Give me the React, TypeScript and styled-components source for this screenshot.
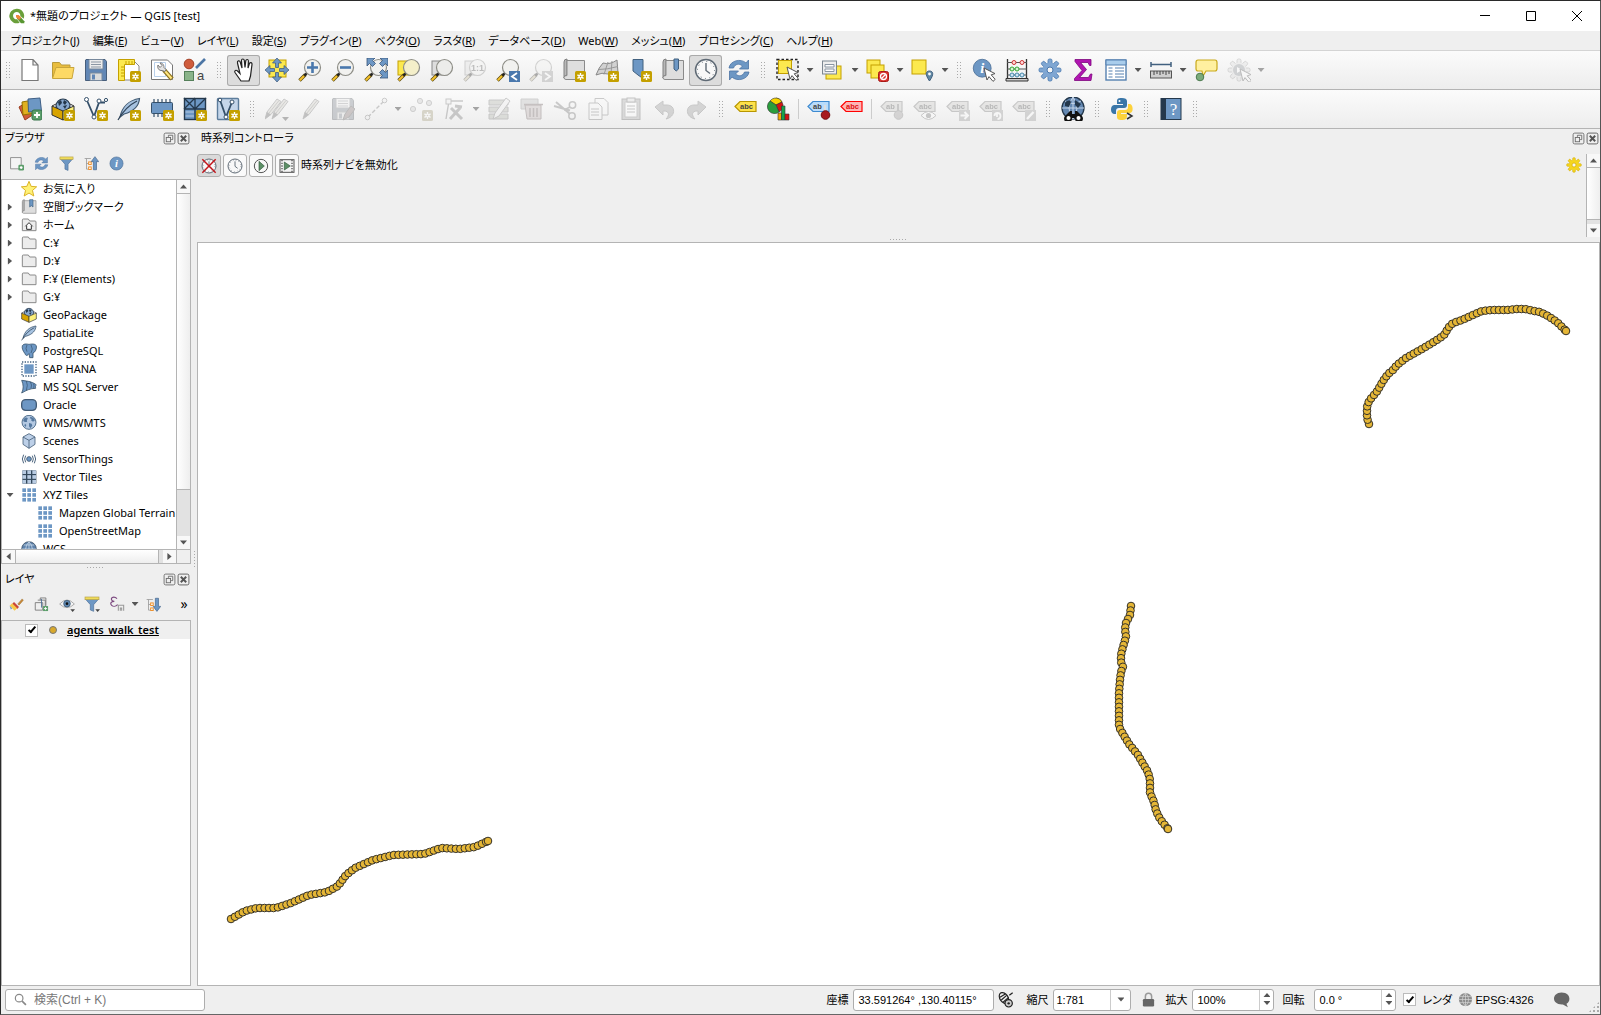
import React from "react";
import styled, { createGlobalStyle, css } from "styled-components";

const line = "#b4b4b4";
const face = "#efefef";
const uiFont = `"Noto Sans", "Noto Sans CJK JP", sans-serif`;
const plainFont = `"Liberation Sans", "Noto Sans CJK JP", sans-serif`;

const GlobalStyle = createGlobalStyle`
  *, *::before, *::after { box-sizing: border-box; }
  html, body { margin: 0; height: 100%; overflow: hidden; }
  body { font: 11px/18px ${uiFont}; font-feature-settings: "palt"; color: #000; background: #222; }
  button, input, select { font: inherit; font-feature-settings: inherit; color: inherit; margin: 0; }
  button { border: 0; padding: 0; background: none; }
  ul { list-style: none; margin: 0; padding: 0; }
  svg { display: block; flex: none; }
`;

/* ---------- icons ---------- */

const Y = "#fce94f";
const YB = "#c4a000";
const B = "#6d97c4";
const BD = "#415a75";

const Star = ({ x = 13, y = 13 }: { x?: number; y?: number }) => (
  <g transform={`translate(${x} ${y})`}>
    <rect width="11" height="11" rx="1.5" fill={YB} />
    <path d="M5.5 2v7M2.4 3.8l6.2 3.5M2.4 7.3l6.2-3.5" stroke="#fff" strokeWidth="1.4" />
    <circle cx="5.5" cy="5.5" r="1.9" fill="#fff" />
    <circle cx="5.5" cy="5.5" r=".8" fill={YB} />
  </g>
);
const Lens = ({ fill = "#f1f1ef" }: { fill?: string }) => (
  <g>
    <path d="M1.5 22.5L7.5 16.5" stroke="#5a4a10" strokeWidth="3.4" />
    <path d="M1.8 22.2L6 18" stroke="#f5c22b" strokeWidth="2" />
    <path d="M6.5 17.5l3-3" stroke="#222" strokeWidth="2.4" />
    <circle cx="14.5" cy="9.5" r="8" fill={fill} stroke="#8d8d86" strokeWidth="1.2" />
  </g>
);
const Cursor = ({ x = 12, y = 10 }: { x?: number; y?: number }) => (
  <path transform={`translate(${x} ${y})`} d="M0 0l11 5.6-3.8 1.2 4 4.6-2.2 2-4-4.8L3 12z" fill="#fff" stroke="#555" strokeWidth="1" />
);
const Pencil = ({ x = 0 }: { x?: number }) => (
  <g transform={`translate(${x} 0)`}>
    <path d="M2 22l2-7L14 2l4 2.5-10 13z" fill="#d9cfa8" stroke="#777" />
    <path d="M2 22l2-7 4 2.5z" fill="#666" />
    <path d="M6 16L16 3.5" stroke="#8c8c70" />
  </g>
);
const MenuMark = () => <path d="M17 20h7l-3.500 4z" fill="#444" />;
const Tag = ({ fill, edge, text }: { fill: string; edge: string; text: string }) => (
  <g>
    <path d="M1 9.500L6 4.500h16v10H6z" fill={fill} stroke={edge} strokeWidth="1.200" />
    <text x="6" y="12.400" fontSize="7.500" fontWeight="700" fontFamily="Liberation Sans, sans-serif" fill={edge === "#f00" ? "#e01010" : "#444"}>{text}</text>
  </g>
);
const Globe = () => (
  <g>
    <circle cx="12" cy="11" r="10.500" fill="#b4c9e2" stroke="#41607f" strokeWidth="1.300" />
    <path d="M4 6c2-3 5-3 6-1s-2 2-1 4-2 2-4 1-2-2-1-4zM14 3c4 0 6 2 7 5l-3 2-3-2 1-2-3-1zM12 12l4 1 1 3-3 4-2-3zM6 13l2 2-1 3-2-2z" fill="#54789f" />
  </g>
);
const Package = () => (
  <g>
    <path d="M5 9a7 7 0 0 1 14 0l-3 6H8z" fill="#88a9cf" stroke="#24384c" strokeWidth="1.200" />
    <path d="M7 5l3-2 1 3-3 3zM13 3l3 2-2 3-2-2zM12 9l4-1-2 4z" fill="#24384c" />
    <path d="M1 9l11 5v9L1 18z" fill="#d8a400" stroke="#333" />
    <path d="M23 9l-11 5v9l11-5z" fill="#fcf07a" stroke="#333" />
    <path d="M1 9l4-2M23 9l-4-2" stroke="#333" />
  </g>
);
const Feather = () => (
  <g>
    <path d="M3 20C5 10 12 3 22.500 1.500 22 8 18 14 7 17z" fill="#a6c2e0" stroke="#3f5870" strokeWidth="1.200" />
    <path d="M1 23C6 14 12 8 20 4" fill="none" stroke="#2f4358" strokeWidth="1.200" />
  </g>
);
const Sync = () => (
  <g>
    <path d="M2 10C3 2.500 14 0 19 5l2.500-3v9h-9l3-3C12 5 8 6 6.500 10z" fill={B} stroke="#4c74a4" strokeWidth=".8" />
    <path d="M22 14c-1 7.500-12 10-17 5l-2.500 3v-9h9l-3 3c3.500 3 7.500 2 9-2z" fill={B} stroke="#4c74a4" strokeWidth=".8" />
  </g>
);
const Folder = () => <path d="M2 20.500V4.500q0-1.500 1.500-1.500H11l2 3h8q1.500 0 1.500 1.500v13z" fill="#ececec" stroke="#8a8a8a" strokeWidth="1.500" />;
const Book = () => (
  <g>
    <path d="M2 4q0-3 3-3v16q-3 0-3 3z" fill="#b8b8b8" stroke="#808080" />
    <path d="M5 2.500h17.500v19H4q-2 0-2-2t3-2z" fill="#dedede" stroke="#8a8a8a" />
  </g>
);
const Gear = ({ fill, edge }: { fill: string; edge: string }) => (
  <g>
    {[0, 45, 90, 135].map((a) => (
      <rect key={a} x="10" y="1" width="4" height="22" rx="1.500" fill={fill} stroke={edge} strokeWidth=".8" transform={`rotate(${a} 12 12)`} />
    ))}
    <circle cx="12" cy="12" r="7.400" fill={fill} />
    <circle cx="12" cy="12" r="3" fill="#f6f6f6" stroke={edge} />
  </g>
);
const Info = () => (
  <g>
    <circle cx="12" cy="12" r="10.500" fill={B} stroke="#4d7098" />
    <text x="12" y="18" textAnchor="middle" fontSize="17" fontStyle="italic" fontWeight="700" fontFamily="Liberation Serif, serif" fill="#fff">i</text>
  </g>
);
const Clock = () => (
  <g>
    <circle cx="12" cy="12" r="10.500" fill="#f8f8f8" stroke="#5f6a75" strokeWidth="1.500" />
    <path d="M12 5v7.500l4 3" fill="none" stroke="#5f6a75" strokeWidth="1.400" />
    <circle cx="12" cy="12" r="8.500" fill="none" stroke="#5f6a75" strokeDasharray="1 3.450" />
  </g>
);
const Filter = () => (
  <g>
    <path d="M2 4.500L9.500 13v8l5 2V13L22 4.500z" fill={B} stroke="#4d7098" />
    <rect x="1.500" y="1.500" width="21" height="4" fill="#f0dc5a" stroke="#b7a24a" />
  </g>
);
const Tree = ({ up }: { up?: boolean }) => (
  <g>
    <path d="M1 4h10M4 4v17h8M4 12h6" stroke="#999" strokeWidth="1.300" fill="none" />
    <rect x="7.500" y="9.500" width="4" height="4" fill="#fff" stroke="#f08a1c" strokeWidth="1.500" />
    <rect x="7.500" y="17.500" width="4" height="4" fill="#fff" stroke="#f08a1c" strokeWidth="1.500" />
    <path transform={up ? undefined : "matrix(1 0 0 -1 0 24)"} d="M17.500 1l6 8h-3.500v13h-5V9H11.500z" fill={B} stroke="#3f5f85" />
  </g>
);
const Tiles = ({ dark }: { dark?: boolean }) => (
  <g>
    {dark && <rect x="2" y="2" width="21" height="20" rx="1" fill="#33485c" />}
    {[0, 1, 2].map((r) => [0, 1, 2].map((c) => (
      <rect key={`${r}${c}`} x={2 + c * 7.5} y={2 + r * 7.2} width="5.500" height="5.500" fill={dark ? "#b8cbe2" : B} />
    )))}
  </g>
);
const Floppy = () => (
  <g>
    <path d="M2 1.500h19l1.500 2v19H1.500V2z" fill="#6287b5" stroke="#475e7b" />
    <path d="M5 1.500h14v9.500H5z" fill="#ececec" stroke="#77889c" />
    <path d="M7 4h10M7 6.500h10M7 9h10" stroke="#8b96a3" strokeWidth="1" />
    <path d="M6 15h12v7.500H6z" fill="#dcdcdc" stroke="#77889c" />
    <path d="M8 16.500h3v5H8z" fill="#6287b5" />
  </g>
);

const icons: Record<string, React.ReactNode> = {
  newfile: <path d="M4 1.500h11l5 5.500v15.500H4zM15 1.500V7h5" fill="#fff" stroke="#777" strokeWidth="1.200" />,
  open: <g><path d="M1.500 20V4.500h7l2 2.500H19v3" fill="#e9bd3e" stroke="#b99a3a" /><path d="M1.500 20.500L5 9.500h18l-2 11z" fill="#fdd965" stroke="#c9a63c" /></g>,
  save: <Floppy />,
  layout: <g><path d="M3 3h14l5 5v14H3z" fill="#fff" stroke="#888" /><path d="M1.500 1.500h16v5h-10v16h-6z" fill={Y} stroke={YB} /><path d="M4 9h3M4 12h3M4 15h3M4 18h3M9 3v3M12 3v3M15 3v3" stroke={YB} /><Star /></g>,
  wrench: <g><path d="M1.500 2h16l5 5v14.500h-21z" fill="#fff" stroke="#777" /><path d="M4.500 4.500h11v14h-11z" fill="#fff" stroke="#b9d0ea" /><path d="M14 12l8 9" stroke="#8d7320" strokeWidth="4.500" /><path d="M15 13l6.500 7.500" stroke="#ffe680" strokeWidth="2" /><path d="M8 7c-1 3 1 6 4 5.500l3 1 1-2-2-2c0-3-2-5-4-4.500l2 2.500-2 2z" fill="#e4e4e4" stroke="#777" /></g>,
  style: <g><circle cx="6" cy="6" r="4.800" fill="#cf5c3c" stroke="#a33f25" /><path d="M13 10L22 1" stroke="#4d76a5" strokeWidth="2.600" /><rect x="1.500" y="13.500" width="9" height="9" fill="#8ab48a" stroke="#55805a" /><text x="14" y="22" fontSize="13" fontFamily="Liberation Sans, sans-serif" fill="#444">a</text></g>,
  hand: <path d="M9 23l-6-8.500c-1-2 1-3 2.500-1.500L8 15.500 5.500 5c-.5-2.500 2-3 2.700-1L10 10 9.500 2.500c0-2 2.500-2 2.800 0L13 9.500l.8-6.800c.5-1.800 2.700-1.500 2.600.4L16 10l1.500-4.600c.8-1.500 2.800-.8 2.500 1L18.500 18 17 23z" fill="#fff" stroke="#222" strokeWidth="1.200" />,
  pansel: <g><rect x="4" y="2" width="17" height="17" fill={Y} stroke={YB} /><g fill={B} stroke="#3a567a" strokeWidth=".7"><path d="M12 0l4.500 5h-3v4.500h-3V5h-3zM12 24l4.500-5h-3v-4.500h-3V19h-3zM0 12l5-4.500v3h4.500v3H5v3zM24 12l-5-4.500v3h-4.500v3H19v3z" /></g></g>,
  zoomin: <g><Lens /><path d="M14.500 4v11M9 9.500h11" stroke="#4a78ad" strokeWidth="2.600" /></g>,
  zoomout: <g><Lens /><path d="M9 9.500h11" stroke="#4a78ad" strokeWidth="2.600" /></g>,
  zoomfull: <g><Lens /><path fill={B} stroke="#3a567a" strokeWidth=".8" d="M3 0h8L8.500 2.500l3 3-3 3-3-3L3 8zM24 0h-8l2.500 2.500-3 3 3 3 3-3L24 8zM24 20h-8l2.500-2.500-3-3 3-3 3 3L24 12z" /></g>,
  zoomsel: <g><rect x="1" y="3" width="15" height="14" fill={Y} stroke={YB} /><Lens fill="#f4efca" /></g>,
  zoomlayer: <g><rect x="2" y="3" width="15" height="14" fill="#ddd" stroke="#888" /><Lens fill="#ececea" /></g>,
  zoom1: <g><rect x="2" y="3" width="15" height="14" fill="#ddd" stroke="#888" /><Lens /><text x="14.500" y="13" textAnchor="middle" fontSize="9" fontWeight="700" fontFamily="Liberation Sans, sans-serif" fill="#555">1:1</text></g>,
  zoomprev: <g><Lens /><rect x="13" y="13" width="11" height="11" fill="#4a78ad" /><path d="M21 15l-5 3.500 5 3.500" fill="none" stroke="#fff" strokeWidth="1.800" /></g>,
  zoomnext: <g><Lens /><rect x="13" y="13" width="11" height="11" fill="#9a9a9a" /><path d="M16 15l5 3.500-5 3.500" fill="none" stroke="#fff" strokeWidth="1.800" /></g>,
  newmap: <g><Book /><Star /></g>,
  new3d: <g><path d="M1 17q3-8 7-12 7 2 14-3l1 13q-6 4-10 1-6-2-12 1z" fill="#d2d2d2" stroke="#888" /><path d="M4 11.500q8 0 19-3M13 4L9 16.500M17 3l-1 13" stroke="#999" fill="none" /><Star /></g>,
  newmark: <g><path d="M5 1.500h10v19L10 17 5 13z" fill={B} stroke="#41607f" /><Star /></g>,
  marks: <g><Book /><path d="M13 1h4.500v10L15.200 13 13 11z" fill={B} stroke="#41607f" /></g>,
  clock: <Clock />,
  sync: <Sync />,
  select: <g><rect x="1" y="1.500" width="21" height="20" fill="#eee" stroke="#222" strokeWidth="1.400" strokeDasharray="2.500 2" /><rect x="2.500" y="2.500" width="13" height="13" fill={Y} stroke={YB} /><Cursor x={11} y={9} /></g>,
  form: <g><rect x="5" y="8" width="15" height="13" fill={Y} stroke={YB} /><rect x="1.500" y="3" width="14" height="13" fill="#eee" stroke="#7d8791" /><path d="M4 6.500h9v2.500H4zM4 11h9v2.500H4z" fill="#fff" stroke="#8b96a3" /></g>,
  deselect: <g><rect x="1" y="2" width="13" height="13" fill={Y} stroke={YB} /><rect x="5" y="7" width="13" height="13" fill={Y} stroke={YB} /><rect x="12.500" y="13.500" width="10" height="10" rx="2" fill="#d9302c" stroke="#a81916" /><circle cx="17.500" cy="18.500" r="3" fill="none" stroke="#fff" strokeWidth="1.300" /><path d="M15.500 20.500l4-4" stroke="#fff" strokeWidth="1.300" /></g>,
  selloc: <g><rect x="1" y="2" width="14" height="14" fill={Y} stroke={YB} /><path d="M18.500 23c-5-7-3.500-10 0-10s5 3 0 10z" fill="#5f87a3" stroke="#41607f" /><circle cx="18.500" cy="16" r="1.400" fill="#fff" /></g>,
  identify: <g><g transform="scale(.85)"><Info /></g><Cursor /></g>,
  abacus: <g><path d="M2.500 1v20M21.500 1v20" stroke="#333" strokeWidth="1.300" /><path d="M1 20.500h22v2.500H1z" fill="#ccc" stroke="#333" /><path d="M2 4.500h20M2 11h20M2 17h20" stroke="#555" /><g fill="#ffd8d8" stroke="#c33"><circle cx="9" cy="4.500" r="2" /><circle cx="17" cy="4.500" r="2" /></g><g fill="#d6f2d6" stroke="#3a3"><circle cx="7" cy="11" r="2" /><circle cx="12" cy="11" r="2" /></g><g fill="#cfe4f5" stroke="#48a"><circle cx="7" cy="17" r="2" /><circle cx="12" cy="17" r="2" /><circle cx="17" cy="17" r="2" /></g></g>,
  gear: <Gear fill="#7fa6d2" edge="#4a78ad" />,
  sigma: <path d="M4 1.500h16v6h-1.500L17 4.500H9.500l6 7-7 8h9l2-3.500H21l-1 6.500H3.500v-2l7.500-8-7-9z" fill="#b015b0" stroke="#7e067e" strokeWidth=".8" />,
  table: <g><rect x="2" y="2" width="20" height="20" fill="#fff" stroke="#5580b0" strokeWidth="1.400" /><path d="M2 2h20v5H2z" fill="#a9cdec" stroke="#5580b0" /><path d="M4.500 10h4M4.500 13h4M4.500 16h4M4.500 19h4M11 10h9M11 13h9M11 16h9M11 19h9" stroke="#5580b0" strokeWidth="1.200" /></g>,
  ruler: <g><path d="M2 6.500h20M2 4v5M22 4v5" stroke="#41607f" strokeWidth="1.500" /><rect x="1.500" y="13" width="21" height="7" fill="#cfcfcf" stroke="#555" /><path d="M5 13v4M8 13v3M11 13v4M14 13v3M17 13v4M20 13v3" stroke="#444" /></g>,
  maptip: <g><path d="M4 2h17q2 0 2 2.500v6q0 2.500-2 2.500h-9l-3 5-1-5H4q-2 0-2-2.500v-6Q2 2 4 2z" fill="#fff0a0" stroke="#c9a91b" strokeWidth="1.200" /><circle cx="6" cy="19" r="3.800" fill="#7bab7b" stroke="#4c7a4f" /></g>,
  action: <g><Gear fill="#ddd" edge="#888" /><circle cx="12" cy="12" r="6" fill="#7f95b0" /><path d="M10 9l5 3-5 3z" fill="#fff" /><Cursor x={13} y={11} /></g>,
  addlayer: <g><path d="M1 10l8-5 7 12-9 6z" fill="#cf5c3c" stroke="#9a3b1c" /><path d="M4 5l11-2 2 13-12 2z" fill="#e0b020" stroke="#967200" /><path d="M10 2l12-1 1.500 13-13 1z" fill={B} stroke="#3f5f85" /><rect x="14" y="13" width="10" height="10" rx="2" fill="#5b9e6a" stroke="#37754a" /><path d="M19 15v6M16 18h6" stroke="#fff" strokeWidth="1.800" /></g>,
  geopackage: <Package />,
  newgpkg: <g><Package /><Star /></g>,
  newshape: <g><path d="M3 3.500l7 16 5-14h6" fill="none" stroke="#35506a" strokeWidth="1.800" /><g fill="#fff" stroke="#35506a"><circle cx="2.500" cy="2.500" r="2" /><circle cx="10" cy="20" r="2" /><circle cx="15" cy="4" r="2" /><circle cx="22" cy="3" r="1.600" /></g><Star /></g>,
  feather: <Feather />,
  newfeather: <g><Feather /><Star /></g>,
  newmem: <g><path d="M4 2v18M8 2v18M12 2v18M16 2v18M20 2v18" stroke="#35506a" strokeWidth="1.200" /><rect x="1.500" y="5.500" width="21" height="11" rx="1" fill={B} stroke="#35506a" /><Star /></g>,
  newmesh: <g><rect x="1.500" y="1.500" width="21" height="21" fill={B} stroke="#24384c" strokeWidth="1.400" /><path d="M12 1v22M1 12h22M1 1l11 11L23 1M1 12L12 1" stroke="#24384c" strokeWidth="1.300" fill="none" /><path d="M2.500 15h8.500M2.500 19h8.500" stroke="#b8cbe2" /><Star /></g>,
  newgps: <g><rect x="1.500" y="1.500" width="21" height="21" rx="1" fill="#c5d6ea" stroke="#5d7d9c" strokeWidth="1.400" /><path d="M4 3l6 17 6-15" fill="none" stroke="#35506a" strokeWidth="1.800" /><g fill="#fff" stroke="#35506a"><circle cx="4" cy="3" r="1.800" /><circle cx="10" cy="20" r="2" /><circle cx="16" cy="5" r="2" /></g><Star /></g>,
  pencils: <g><Pencil x={-2} /><Pencil x={5} /><MenuMark /></g>,
  pencil: <Pencil x={3} />,
  saveedit: <g><Floppy /><path d="M12 23l2-6 6-8 4 3-6 8z" fill="#b66" stroke="#555" /></g>,
  addline: <g><path d="M4 20L20 4" stroke="#777" strokeWidth="1.400" strokeDasharray="4 2" /><g fill="#eee" stroke="#777"><circle cx="3.500" cy="20.500" r="2.300" /><circle cx="20.500" cy="3.500" r="2.300" /></g></g>,
  points: <g><g fill="#ccc" stroke="#888"><circle cx="4" cy="12" r="2.600" /><circle cx="11" cy="4" r="2.600" /><circle cx="20" cy="6" r="2.600" /></g><Star /></g>,
  vertex: <g><path d="M4 22L7 4h14" fill="none" stroke="#777" strokeWidth="1.400" /><rect x="4" y="2" width="5" height="5" fill="#eee" stroke="#777" /><path d="M8 22l10-11M9 11l11 11M13 9l7 1" stroke="#777" strokeWidth="3" /></g>,
  modify: <g><path d="M2 3h19v5H2zM2 10h19v5H2zM2 17h19v5H2z" fill="#a9b98a" stroke="#777" /><path d="M6 22l2-6L19 1l4 3-11 15z" fill="#eee" stroke="#777" /></g>,
  del: <g><path d="M1 2h17v10H1z" fill="#bbb" stroke="#888" /><path d="M5 8h16v14H7z" fill="#e3a5a5" stroke="#955" /><path d="M4 7.500h19M10 11v9M13.500 11v9M17 11v9" stroke="#955" strokeWidth="1.500" /></g>,
  cut: <g fill="none" stroke="#777" strokeWidth="1.500"><path d="M1 9l16 4.500M3 5l14 12" strokeWidth="2" /><circle cx="19.500" cy="8" r="3.200" /><circle cx="19" cy="19" r="3.200" /><path d="M11 13l6-3" /></g>,
  copy: <g fill="#f8f8f8" stroke="#777"><path d="M9 1.500h9l4 4V18H9z" /><path d="M3 6h9l4 4v12.500H3z" /><path d="M5 12h8M5 15h8M5 18h8" /></g>,
  paste: <g><rect x="3" y="2" width="18" height="20.500" fill="#aaa" stroke="#666" /><path d="M6 5h12v15H6z" fill="#fff" stroke="#888" /><rect x="8" y="1" width="8" height="4" fill="#ddd" stroke="#666" /><path d="M8 9h8M8 12h8M8 15h8" stroke="#777" /></g>,
  undo: <path d="M3 10l8-6v4h4c9 0 9 12-1 14 4-4 3-8-2-8h-1v4z" fill="#999" stroke="#777" />,
  redo: <path d="M21 10l-8-6v4H9c-9 0-9 12 1 14-4-4-3-8 2-8h1v4z" fill="#999" stroke="#777" />,
  label: <Tag fill="#fde14a" edge="#b89600" text="abc" />,
  diagram: <g><path d="M9 8V1a7 7 0 0 1 6 4z" fill="#f7d400" stroke="#333" strokeWidth=".6" /><path d="M9 8L3 4a7 7 0 0 1 12 1z" fill="#f7d400" stroke="#333" strokeWidth=".6" /><path d="M9 8l6-3a7 7 0 0 1-3 10z" fill="#d41414" stroke="#333" strokeWidth=".6" /><path d="M9 8l3 7A7 7 0 0 1 3 4z" fill="#2a9e3c" stroke="#333" strokeWidth=".6" /><path d="M11 16h3.500v7H11z" fill="#f7a800" stroke="#333" strokeWidth=".6" /><path d="M14.500 9H18v14h-3.500z" fill="#16a34a" stroke="#333" strokeWidth=".6" /><path d="M18 17h4v6h-4z" fill="#d41414" stroke="#333" strokeWidth=".6" /></g>,
  tagpin: <g><Tag fill="#b9dcfb" edge="#3d8ad0" text="ab" /><path d="M18 8v9" stroke="#ddd" strokeWidth="2" /><circle cx="18.500" cy="18" r="4.300" fill="#a8191e" stroke="#6e0d10" /></g>,
  tagred: <Tag fill="#fdb5b5" edge="#f00" text="abc" />,
  tagpin2: <g><Tag fill="#ccc8b8" edge="#777" text="ab" /><path d="M18 7v9" stroke="#777" strokeWidth="2" /><circle cx="18.500" cy="18" r="4.300" fill="#a89898" stroke="#777" /></g>,
  tageye: <g><Tag fill="#ccc8b8" edge="#777" text="abc" /><path d="M8 18.500q7.500-8 15 0-7.500 8-15 0z" fill="#fff" stroke="#777" /><circle cx="15.500" cy="18.500" r="2.600" fill="#777" /></g>,
  tagmove: <g><Tag fill="#ccc8b8" edge="#777" text="abc" /><rect x="13" y="13" width="11" height="11" fill="#999" /><path d="M14.500 18.500h7M18.500 15l3.500 3.500-3.500 3.500" stroke="#fff" strokeWidth="2" fill="none" /></g>,
  tagrot: <g><Tag fill="#ccc8b8" edge="#777" text="abc" /><rect x="13" y="13" width="11" height="11" fill="#999" /><path d="M15.500 19a3 3 0 1 1 3 3M18 17v3" stroke="#fff" strokeWidth="1.800" fill="none" /></g>,
  tagedit: <g><Tag fill="#ccc8b8" edge="#777" text="abc" /><rect x="13" y="13" width="11" height="11" fill="#999" /><path d="M15 22l6.500-7" stroke="#fff" strokeWidth="2.400" fill="none" /></g>,
  search: <g><circle cx="12" cy="11" r="11" fill="#6488b2" stroke="#24384c" strokeWidth="1.300" /><path d="M1 11h22M12 0v22M4 4q8 5 16 0M12 0Q4 11 12 22M12 0q8 11 0 22" fill="none" stroke="#c3d4e8" /><path d="M4 6c2-3 5-3 6-1l-2 5-4-1zM14 3l6 4-3 4-3-3z" fill="#24384c" /><path d="M9 14h2v3h3v-3h2l5 5a4 4 0 1 1-7 2h-3a4 4 0 1 1-7-2z" fill="#111" /><circle cx="7.500" cy="21" r="2" fill="#fff" /><circle cx="17.500" cy="21" r="2" fill="#fff" /></g>,
  python: <g><path d="M12 1c-5 0-5 1.500-5 4v2h6v1H4c-4 0-4 9 0 9h2v-3c0-2 1-3 3-3h5c2 0 3-1 3-3V4c0-2-2-3-5-3z" fill="#3a76a8" /><path d="M11 23c5 0 6-1.500 6-4v-2h-6v-1h9c4 0 3-9 0-9h-2v3c0 2-1 3-3 3h-5c-2 0-3 1-3 3v4c0 2 1 3 4 3z" fill="#fdd23b" /><circle cx="9.500" cy="4" r="1" fill="#fff" /><path d="M17 16l5 3-5 3" fill="none" stroke="#333" strokeWidth="1.500" /></g>,
  help: <g><rect x="2" y="1.500" width="20" height="21" fill={B} stroke="#24384c" /><path d="M2 1.500h5v21H2z" fill="#24384c" /><text x="14.500" y="18" textAnchor="middle" fontSize="17" fontFamily="Liberation Serif, serif" fill="#fff">?</text></g>,
  addsel: <g><path d="M2.500 2.500h17v18h-17z" fill="#f4f4f4" stroke="#888" strokeWidth="1.400" /><rect x="15" y="14" width="9" height="9" rx="2" fill="#5b9e6a" /><circle cx="19.500" cy="18.500" r="2.200" fill="#fff" /></g>,
  filter: <Filter />,
  filtermenu: <g><Filter /><MenuMark /></g>,
  collapse: <Tree up />,
  expand: <Tree />,
  info: <Info />,
  fav: <path d="M12 .5l3.200 7.500 8.300.7-6.300 5.500 2 8.300-7.200-4.400-7.200 4.400 2-8.300L.5 8.700 8.800 8z" fill="#fff176" stroke="#d8ae1c" strokeWidth="1.400" />,
  bookmark: <g><Book /><path d="M13 1h5v11l-2.500-2L13 12z" fill={B} stroke="#41607f" /></g>,
  home: <g><Folder /><path d="M6.500 14L12 8.500l5.500 5.500M8.500 13v5.500h7V13" fill="#fff" stroke="#222" strokeWidth="1.400" /></g>,
  folder: <Folder />,
  elephant: <g><path d="M2 4c3-4 8-2 10-2s8-2 11 2c1 5-2 10-5 11v7h-5l-1-6c-3 4-5 3-6 0C3 12 1 8 2 4z" fill={B} stroke="#35506a" strokeWidth="1.200" /><path d="M9 3q-3 5 0 10M15 3q4 6 0 12" fill="none" stroke="#35506a" /></g>,
  hana: <g><rect x="5" y="5" width="14" height="14" fill={B} /><rect x="1.500" y="1.500" width="21" height="21" fill="none" stroke="#41607f" strokeWidth="2" strokeDasharray="2 2" /></g>,
  mssql: <g><path d="M1 2c10 1 18 3 22 7-2 1-1 3-1 5-8 0-14 3-21 7 3-6 3-12 0-19z" fill={B} stroke="#35506a" strokeWidth="1.200" /><path d="M8 3q3 6 0 14M14 4q3 5 1 10M19 7q1 3 0 7" fill="none" stroke="#35506a" /></g>,
  oracle: <rect x="1" y="4" width="22" height="16" rx="6" fill={B} stroke={BD} strokeWidth="2" />,
  globe: <Globe />,
  scenes: <g fill="#bdd0e8" stroke={BD} strokeWidth="1.200"><path d="M12 1l9 5v11l-9 6-9-6V6z" /><path d="M3 6l9 5 9-5M12 11v12" fill="none" /></g>,
  sensor: <g fill="none" stroke={BD} strokeWidth="1.400"><circle cx="12" cy="12" r="3.500" fill={B} /><path d="M7 7q-3 5 0 10M4 5.500q-4 6.500 0 13M17 7q3 5 0 10M20 5.500q4 6.500 0 13" /></g>,
  vtiles: <Tiles dark />,
  tiles: <Tiles />,
  wcs: <g><circle cx="12" cy="12" r="11" fill="#5f83ac" stroke="#24384c" /><path d="M1 12h22M12 1v22M4 6h16M12 1Q2 12 12 23M12 1q10 11 0 22" fill="none" stroke="#dce8f4" /></g>,
  brush: <g><path d="M14 11l7-8 2 2-7 8z" fill="#c98a3a" stroke="#8a5a1c" strokeWidth=".6" /><path d="M8 8l8 8-3 3-8-8z" fill="#c8453b" /><path d="M5 10l8 8-4 4-8-8z" fill="#f7c94b" /><path d="M1 14l4 4-2 2z" fill="#5b8fd0" /></g>,
  addgroup: <g fill="none" stroke="#777" strokeWidth="1.400"><path d="M2 9h12v12H2zM6 5h12v12M10 5V1.500h9V14" /><path d="M12 3v14" stroke="#4d7098" /><rect x="14.500" y="14.500" width="8" height="8" fill="#5b9e6a" stroke="none" /><path d="M18.500 16v5M16 18.500h5" stroke="#fff" /></g>,
  eye: <g><path d="M1 12Q12 0 23 12 12 23 1 12z" fill="#f6f6f6" stroke="#888" /><circle cx="12" cy="11.500" r="5" fill="#5f87b0" stroke="#35506a" /><circle cx="12" cy="11.500" r="2" fill="#111" /><MenuMark /></g>,
  epsilon: <g><path d="M12 4C8 0 2 2 4 6c1 2 4 2 4 2-5 0-7 3-4 6 2 2 6 2 9-1" fill="none" stroke="#7d4a80" strokeWidth="1.800" /><path d="M14 22v-8h8v8M17 22v-4h2v4" fill="none" stroke="#999" strokeWidth="1.600" /></g>,
  toff: <g><Clock /><path d="M2 2l20 20M22 2L2 22" stroke="#c4161c" strokeWidth="2.200" /></g>,
  tplay: <g><circle cx="12" cy="12" r="10" fill="#f8f8f8" stroke="#555" strokeWidth="1.500" /><path d="M9 5l8 7-8 7z" fill="#5b8f65" stroke="#335a3c" /></g>,
  tfilm: <g><rect x="1.500" y="2.500" width="21" height="19" fill="#f4f4f4" stroke="#555" strokeWidth="1.500" /><path d="M4.500 3v18M19.500 3v18" stroke="#555" strokeWidth="2" strokeDasharray="2 2" /><path d="M8 6l9 6-9 6z" fill="#5b8f65" stroke="#335a3c" /></g>,
  goldgear: <Gear fill="#f5d51c" edge="#d0a800" />,
  dock: <g fill="none" stroke="#666" strokeWidth="1.600"><rect x="2" y="2" width="20" height="20" rx="3" /><rect x="6" y="10" width="8" height="8" /><path d="M10 9V6h8v8h-3" /></g>,
  shut: <g fill="none" stroke="#555" strokeWidth="1.600"><rect x="2" y="2" width="20" height="20" rx="3" /><path d="M7 7l10 10M17 7L7 17" strokeWidth="3.600" /></g>,
  qgis: <g><path d="M12 1a11 11 0 1 0 4 21l-4-5a5.500 5.500 0 1 1 5-5l5 4A11 11 0 0 0 12 1z" fill="#6a9f3a" /><path d="M12 12h4l7 8v3h-5l-6-7z" fill="#589632" /><path d="M10.500 10.500h4l4 4-3.500 3.500-4.500-4z" fill="#f0883a" /></g>,
  mag: <g fill="none" stroke="#888" strokeWidth="2.200"><circle cx="9.500" cy="9.500" r="7" /><path d="M15 15l7 7" strokeWidth="3" /></g>,
  mouse: <g><ellipse cx="9" cy="9" rx="6" ry="9" transform="rotate(-35 9 9)" fill="#eee" stroke="#222" strokeWidth="1.800" /><path d="M3 8l8-5M5 12l8-7M8 15l8-7M17 5l5-4" stroke="#222" strokeWidth="1.800" /><circle cx="16" cy="17" r="5.500" fill="#ccc" stroke="#222" strokeWidth="1.800" /><circle cx="16" cy="17" r="1.800" fill="#222" /></g>,
  lock: <g><path d="M7 12V7q0-5 5-5t5 5v5" fill="none" stroke="#999" strokeWidth="2.400" /><rect x="3" y="11" width="18" height="12" rx="2" fill="#666" /></g>,
  crs: <g><circle cx="12" cy="12" r="10.500" fill="#8b8b8b" /><path d="M1 12h22M12 1v22M3 7h18M3 17h18M12 1Q2 12 12 23M12 1q10 11 0 22" fill="none" stroke="#ddd" /></g>,
  bubble: <path d="M12 2c14 0 13 14 7 16l2 5-7-4C-3 20-2 2 12 2z" fill="#666" />,
};

const Svg = ({ name, size = 24 }: { name: string; size?: number }) => (
  <svg width={size} height={size} viewBox="0 0 24 24" aria-hidden="true">{icons[name]}</svg>
);

/* ---------- frame ---------- */

const Window = styled.div`
  height: 100vh;
  display: flex;
  flex-direction: column;
  background: ${face};
  border: 1px solid #2a2a2a;
  border-right-color: #555;
  border-bottom-color: #666;
`;
const TitleBar = styled.header`
  display: flex;
  align-items: center;
  height: 30px;
  padding-left: 8px;
  background: #fff;
`;
const Title = styled.h1`
  flex: 1;
  margin: 0 0 0 5px;
  padding-bottom: 1px;
  font-size: 11px;
  font-weight: 400;
`;
const WindowButton = styled.button`
  width: 46px;
  height: 30px;
  display: grid;
  place-items: center;
`;
const MenuBar = styled.nav`
  display: flex;
  height: 20px;
  padding-left: 10px;
  gap: 13px;
  border-bottom: 1px solid #d4d4d4;
`;
const MenuButton = styled.button`
  white-space: nowrap;
  line-height: 18px;
`;
const Toolbar = styled.div`
  display: flex;
  align-items: center;
  height: 39px;
  background: linear-gradient(#fbfbfb, #ededed);
  border-bottom: 1px solid ${line};
`;
const Grip = styled.span<{ $first?: boolean }>`
  width: ${(p) => (p.$first ? 12 : 16)}px;
  height: 18px;
  flex: none;
  background: radial-gradient(circle, #aaa 1px, transparent 1px) 0 0 / 3px 3px content-box;
  padding: 0 ${(p) => (p.$first ? 3 : 6)}px 0 ${(p) => (p.$first ? 4 : 5)}px;
`;
const Divider = styled.span`
  width: 1px;
  height: 20px;
  margin: 0 3px;
  background: #ccc;
`;
const ToolButton = styled.button<{ $on?: boolean }>`
  flex: none;
  width: 33px;
  height: 31px;
  display: grid;
  place-items: center;
  border-radius: 3px;
  ${(p) => p.$on && css`background: #dcdcdc; box-shadow: inset 0 0 0 1px #aaa;`}
  &:disabled { filter: grayscale(0.8); opacity: 0.35; }
`;
const Arrow = styled.span<{ $dir?: "up" | "down" | "left" | "right" }>`
  width: 7px;
  height: 7px;
  flex: none;
  background: #555;
  clip-path: ${(p) =>
    ({
      up: "polygon(50% 20%, 100% 80%, 0 80%)",
      down: "polygon(0 20%, 100% 20%, 50% 80%)",
      left: "polygon(80% 0, 80% 100%, 20% 50%)",
      right: "polygon(20% 0, 80% 50%, 20% 100%)",
    })[p.$dir ?? "down"]};
`;
const DropButton = styled.button`
  width: 12px;
  height: 31px;
  display: grid;
  place-items: center;
  &:disabled { opacity: 0.5; }
`;

type Item = string | [string, string, string?];
/* flags: d = disabled, m = has a menu, o = switched on */
const mapTools: Item[] = [
  "|", ["newfile", "New Project"], ["open", "Open Project"], ["save", "Save Project"], ["layout", "New Print Layout"], ["wrench", "Layout Manager"], ["style", "Style Manager"],
  "|", ["hand", "Pan Map", "o"], ["pansel", "Pan to Selection"], ["zoomin", "Zoom In"], ["zoomout", "Zoom Out"], ["zoomfull", "Zoom Full"], ["zoomsel", "Zoom to Selection"], ["zoomlayer", "Zoom to Layer"], ["zoom1", "Native Resolution", "d"], ["zoomprev", "Zoom Last"], ["zoomnext", "Zoom Next", "d"], ["newmap", "New Map View"], ["new3d", "New 3D Map View"], ["newmark", "New Bookmark"], ["marks", "Show Bookmarks"], ["clock", "Temporal Controller", "o"], ["sync", "Refresh"],
  "|", ["select", "Select Features", "m"], ["form", "Select by Value", "m"], ["deselect", "Deselect", "m"], ["selloc", "Select by Location", "m"],
  "|", ["identify", "Identify"], ["abacus", "Field Calculator"], ["gear", "Toolbox"], ["sigma", "Statistics"], ["table", "Attribute Table", "m"], ["ruler", "Measure", "m"], ["maptip", "Map Tips"], ["action", "Run Action", "dm"],
];
const editTools: Item[] = [
  "|", ["addlayer", "Data Source Manager"], ["newgpkg", "New GeoPackage"], ["newshape", "New Shapefile"], ["newfeather", "New SpatiaLite"], ["newmem", "New Scratch Layer"], ["newmesh", "New Mesh"], ["newgps", "New GPX"],
  "|", ["pencils", "Current Edits", "d"], ["pencil", "Toggle Editing", "d"], ["saveedit", "Save Edits", "d"], ["addline", "Digitize", "dm"], ["points", "Add Point", "d"], ["vertex", "Vertex Tool", "dm"], ["modify", "Modify Attributes", "d"], ["del", "Delete Selected", "d"], ["cut", "Cut", "d"], ["copy", "Copy", "d"], ["paste", "Paste", "d"], ["undo", "Undo", "d"], ["redo", "Redo", "d"],
  "|", ["label", "Labeling"], ["diagram", "Diagrams"], "-", ["tagpin", "Highlight Pinned"], ["tagred", "Unplaced Labels"], "-", ["tagpin2", "Pin Labels", "d"], ["tageye", "Show Labels", "d"], ["tagmove", "Move Label", "d"], ["tagrot", "Rotate Label", "d"], ["tagedit", "Change Label", "d"],
  "|", ["search", "MetaSearch"], "|", ["python", "Python Console"], "|", ["help", "Help"], "|",
];

const Tools = ({ items, name }: { items: Item[]; name: string }) => (
  <Toolbar role="toolbar" aria-label={name}>
    {items.map((it, i) => {
      if (it === "|") return <Grip key={i} $first={i === 0} />;
      if (typeof it === "string") return <Divider key={i} />;
      const [icon, label, flags = ""] = it;
      return (
        <React.Fragment key={i}>
          <ToolButton aria-label={label} $on={flags.includes("o")} disabled={flags.includes("d")}>
            <Svg name={icon} />
          </ToolButton>
          {flags.includes("m") && (
            <DropButton aria-label={`${label} menu`} disabled={flags.includes("d")}><Arrow /></DropButton>
          )}
        </React.Fragment>
      );
    })}
  </Toolbar>
);

/* ---------- docks ---------- */

const Body = styled.main`
  flex: 1;
  min-height: 0;
  display: flex;
`;
const Side = styled.aside`
  width: 190px;
  display: flex;
  flex-direction: column;
  min-height: 0;
`;
const Center = styled.section`
  flex: 1;
  min-width: 0;
  display: flex;
  flex-direction: column;
`;
const DockTitle = styled.div`
  display: flex;
  align-items: center;
  height: 20px;
  padding: 0 1px 2px 4px;
`;
const DockName = styled.h2`
  flex: 1;
  margin: 0;
  font-size: 11px;
  font-weight: 400;
`;
const DockButton = styled.button`
  width: 14px;
  height: 14px;
  display: grid;
  place-items: center;
`;
const DockTools = styled.div`
  display: flex;
  align-items: center;
  height: 30px;
  padding: 0 0 2px 3px;
`;
const SmallButton = styled.button`
  width: 25px;
  height: 24px;
  display: flex;
  align-items: center;
  justify-content: center;
`;
const MoreButton = styled(SmallButton)`
  width: 14px;
  margin-left: auto;
  font-size: 14px;
`;
const Splitter = styled.div<{ $vertical?: boolean; $size: number }>`
  flex: none;
  display: grid;
  place-items: center;
  ${(p) => (p.$vertical ? "width" : "height")}: ${(p) => p.$size}px;
  &::after {
    content: "";
    ${(p) => (p.$vertical ? "width: 1px; height: 18px;" : "width: 18px; height: 1px;")}
    background: repeating-linear-gradient(${(p) => (p.$vertical ? "0deg" : "90deg")}, #aaa 0 1px, transparent 1px 3px);
  }
`;
const TreeFrame = styled.div`
  flex: 0 1 385px;
  min-height: 0;
  display: grid;
  grid-template: minmax(0, 1fr) 14px / minmax(0, 1fr) 14px;
  background: #fff;
  border: 1px solid ${line};
`;
const TreeList = styled.ul`
  overflow: hidden;
`;
const Row = styled.li<{ $depth: number }>`
  display: flex;
  align-items: center;
  height: 18px;
  padding-left: ${(p) => 4 + p.$depth * 16}px;
  white-space: nowrap;
`;
const Twisty = styled.button`
  width: 8px;
  height: 18px;
  display: grid;
  place-items: center;
`;
const RowLabel = styled.span`
  margin-left: 6px;
`;
const RowIcon = styled.span`
  margin-left: 7px;
`;
const ScrollTrack = styled.div<{ $axis: "x" | "y" }>`
  display: flex;
  flex-direction: ${(p) => (p.$axis === "x" ? "row" : "column")};
  background: #e2e2e2;
  border-${(p) => (p.$axis === "x" ? "top" : "left")}: 1px solid ${line};
`;
const ScrollCorner = styled.div`
  border: solid ${line};
  border-width: 1px 0 0 1px;
  background: ${face};
`;
const ScrollButton = styled.button`
  flex: none;
  width: 13px;
  height: 13px;
  display: grid;
  place-items: center;
  background: #f8f8f8;
`;
const Thumb = styled.div<{ $axis: "x" | "y"; $rest: number }>`
  flex: 1;
  background: linear-gradient(${(p) => (p.$axis === "x" ? "180deg" : "90deg")}, #fff, #eee);
  ${(p) =>
    p.$axis === "x"
      ? `border: solid ${line}; border-width: 0 1px; margin-right: ${p.$rest}px;`
      : `border: solid ${line}; border-width: 1px 0; margin-bottom: ${p.$rest}px;`}
`;
const LayerBox = styled.ul`
  flex: 1;
  min-height: 0;
  background: #fff;
  border: 1px solid ${line};
`;
const LayerRow = styled.label`
  display: flex;
  align-items: center;
  height: 18px;
  padding-left: 23px;
  background: ${face};
  font-weight: 600;
  text-decoration: underline;
`;
const Tick = styled.input`
  appearance: none;
  width: 13px;
  height: 13px;
  flex: none;
  border: 1px solid #bbb;
  background: #fff;
  display: grid;
  place-items: center;
  &:checked::after {
    content: "";
    width: 8px;
    height: 4px;
    margin-bottom: 2px;
    border: solid #000;
    border-width: 0 0 2px 2px;
    transform: rotate(-50deg);
  }
`;
const Marker = styled.span`
  width: 8px;
  height: 8px;
  margin: 0 10px 0 11px;
  border: 1px solid #777;
  border-radius: 50%;
  background: #d9a92c;
`;

const Scroll = ({ axis, rest }: { axis: "x" | "y"; rest: number }) => (
  <ScrollTrack $axis={axis}>
    <ScrollButton aria-label="Scroll back"><Arrow $dir={axis === "x" ? "left" : "up"} /></ScrollButton>
    <Thumb $axis={axis} $rest={rest} />
    <ScrollButton aria-label="Scroll forward"><Arrow $dir={axis === "x" ? "right" : "down"} /></ScrollButton>
  </ScrollTrack>
);
const Dock = ({ name }: { name: string }) => (
  <DockTitle>
    <DockName>{name}</DockName>
    <DockButton aria-label="Float"><Svg name="dock" size={13} /></DockButton>
    <DockButton aria-label="Close"><Svg name="shut" size={13} /></DockButton>
  </DockTitle>
);

const tree: [string, string, number, ("right" | "down")?][] = [
  ["fav", "お気に入り", 0], ["bookmark", "空間ブックマーク", 0, "right"], ["home", "ホーム", 0, "right"],
  ["folder", "C:¥", 0, "right"], ["folder", "D:¥", 0, "right"], ["folder", "F:¥ (Elements)", 0, "right"], ["folder", "G:¥", 0, "right"],
  ["geopackage", "GeoPackage", 0], ["feather", "SpatiaLite", 0], ["elephant", "PostgreSQL", 0], ["hana", "SAP HANA", 0],
  ["mssql", "MS SQL Server", 0], ["oracle", "Oracle", 0], ["globe", "WMS/WMTS", 0], ["scenes", "Scenes", 0], ["sensor", "SensorThings", 0],
  ["vtiles", "Vector Tiles", 0], ["tiles", "XYZ Tiles", 0, "down"], ["tiles", "Mapzen Global Terrain", 1], ["tiles", "OpenStreetMap", 1], ["wcs", "WCS", 0],
];

/* ---------- temporal controller and map ---------- */

const Temporal = styled.div`
  display: flex;
  height: 83px;
  margin-top: 5px;
`;
const ModeBar = styled.div`
  flex: 1;
  display: flex;
  align-items: flex-start;
  gap: 2px;
`;
const ModeButton = styled.button<{ $on?: boolean }>`
  width: 24px;
  height: 23px;
  display: grid;
  place-items: center;
  border: 1px solid #b0b0b0;
  border-radius: 3px;
  background: ${(p) => (p.$on ? "#dadada" : "#fafafa")};
`;
const ModeLabel = styled.span`
  flex: 1;
  line-height: 23px;
  font-family: ${plainFont};
`;
const GearButton = styled.button`
  width: 25px;
  height: 22px;
  display: grid;
  place-items: center;
`;
const ScrollHost = styled.div`
  width: 14px;
  display: grid;
`;
const MapCanvas = styled.div`
  flex: 1;
  min-height: 0;
  background: #fff;
  border: 1px solid ${line};
  overflow: hidden;
`;

type P = [number, number];
/* walk routes in canvas pixels */
const routes: P[][] = [
  [[1171, 181], [1169, 175], [1169, 170], [1169, 164], [1171, 158], [1175, 153], [1178, 150], [1181, 145], [1185, 138], [1190, 131], [1195, 127], [1199, 122], [1208, 115], [1215, 111], [1224, 106], [1234, 100], [1242, 95], [1247, 91], [1250, 85], [1255, 80], [1264, 77], [1275, 72], [1284, 68], [1294, 67], [1309, 67], [1319, 66], [1327, 66], [1336, 68], [1342, 69], [1350, 73], [1359, 79], [1364, 84], [1368, 88]],
  [[933, 363], [932, 372], [928, 380], [927, 386], [928, 394], [925, 404], [923, 412], [923, 419], [925, 424], [923, 429], [922, 437], [921, 450], [921, 484], [925, 491], [931, 501], [940, 512], [944, 519], [950, 529], [952, 537], [952, 550], [956, 559], [958, 568], [962, 576], [970, 586]],
  [[33, 676], [47, 668], [59, 665], [78, 665], [93, 660], [111, 652], [129, 649], [140, 643], [148, 632], [157, 625], [175, 617], [195, 612], [226, 611], [243, 605], [261, 606], [277, 604], [290, 598]],
];
const dotsAlong = (pts: P[], step: number): P[] => {
  const out: P[] = [pts[0]];
  let left = step;
  for (let i = 1; i < pts.length; i++) {
    const [ax, ay] = pts[i - 1];
    const [bx, by] = pts[i];
    const len = Math.hypot(bx - ax, by - ay);
    let at = left;
    for (; at <= len; at += step) out.push([ax + ((bx - ax) * at) / len, ay + ((by - ay) * at) / len]);
    left = at - len;
  }
  out.push(pts[pts.length - 1]);
  return out;
};

/* ---------- status bar ---------- */

const StatusBar = styled.footer`
  display: flex;
  align-items: center;
  height: 28px;
  padding: 0 0 1px 4px;
  font-family: ${plainFont};
`;
const Box = styled.div<{ $w: number }>`
  display: flex;
  align-items: center;
  width: ${(p) => p.$w}px;
  height: 22px;
  border: 1px solid #adadad;
  border-radius: 3px;
  background: #fff;
`;
const Field = styled.input`
  flex: 1;
  width: 100%;
  min-width: 0;
  border: 0;
  outline: 0;
  padding: 0 4px;
  background: none;
  &::placeholder { color: #777; opacity: 1; font-size: 12px; }
`;
const Scale = styled.select`
  flex: 1;
  height: 20px;
  border: 0;
  padding: 0 2px;
  background: none;
  appearance: none;
`;
const ComboArrow = styled.span`
  width: 20px;
  height: 20px;
  display: grid;
  place-items: center;
  border-left: 1px solid #ccc;
`;
const Steps = styled.span`
  width: 14px;
  height: 20px;
  display: flex;
  flex-direction: column;
  justify-content: center;
  align-items: center;
  border-left: 1px solid #ccc;
`;
const Step = styled.button`
  display: grid;
  height: 8px;
`;
const StatusLabel = styled.label<{ $before?: number; $after?: number }>`
  margin: 0 ${(p) => p.$after ?? 5}px 0 ${(p) => p.$before ?? 8}px;
`;
const SearchIcon = styled.span`
  margin: 0 3px 0 8px;
`;
const Spacer = styled.span`
  flex: 1;
`;
const StatusButton = styled.button<{ $w: number }>`
  width: ${(p) => p.$w}px;
  height: 22px;
  display: flex;
  align-items: center;
  justify-content: center;
  gap: 2px;
`;
const RenderLabel = styled.label`
  display: flex;
  align-items: center;
  gap: 6px;
  margin-left: 7px;
`;
const SizeGrip = styled.span`
  align-self: flex-end;
  width: 12px;
  height: 12px;
  margin-left: 6px;
  background: radial-gradient(circle, #aaa 1px, transparent 1px) 0 0 / 4px 4px;
  clip-path: polygon(100% 0, 100% 100%, 0 100%);
`;

const Spin = ({ id, value }: { id: string; value: string }) => (
  <Box $w={82}>
    <Field id={id} defaultValue={value} />
    <Steps>
      <Step aria-label="Increase"><Arrow $dir="up" /></Step>
      <Step aria-label="Decrease"><Arrow /></Step>
    </Steps>
  </Box>
);

const menus = [
  ["プロジェクト", "J"], ["編集", "E"], ["ビュー", "V"], ["レイヤ", "L"], ["設定", "S"], ["プラグイン", "P"], ["ベクタ", "O"],
  ["ラスタ", "R"], ["データベース", "D"], ["Web", "W"], ["メッシュ", "M"], ["プロセシング", "C"], ["ヘルプ", "H"],
];

export default function App() {
  return (
    <>
      <GlobalStyle />
      <Window>
        <TitleBar>
          <Svg name="qgis" size={16} />
          <Title>*無題のプロジェクト — QGIS [test]</Title>
          <WindowButton aria-label="Minimize"><svg width="10" height="10"><path d="M0 4.500h10" stroke="#000" /></svg></WindowButton>
          <WindowButton aria-label="Maximize"><svg width="10" height="10"><path d="M.5.5h9v9h-9z" fill="none" stroke="#000" /></svg></WindowButton>
          <WindowButton aria-label="Close"><svg width="10" height="10"><path d="M0 0l10 10M10 0L0 10" stroke="#000" /></svg></WindowButton>
        </TitleBar>
        <MenuBar>
          {menus.map(([t, k]) => <MenuButton key={t}>{t}(<u>{k}</u>)</MenuButton>)}
        </MenuBar>
        <Tools items={mapTools} name="Map tools" />
        <Tools items={editTools} name="Editing tools" />
        <Body>
          <Side>
            <Dock name="ブラウザ" />
            <DockTools>
              {[["addsel", "Add Layers"], ["sync", "Refresh"], ["filter", "Filter"], ["collapse", "Collapse All"], ["info", "Properties"]].map(([n, l]) => (
                <SmallButton key={n} aria-label={l}><Svg name={n} size={15} /></SmallButton>
              ))}
            </DockTools>
            <TreeFrame>
              <TreeList>
                {tree.map(([icon, label, depth, open]) => (
                  <Row key={label} $depth={depth}>
                    {open ? <Twisty aria-label={`Toggle ${label}`}><Arrow $dir={open} /></Twisty> : <Twisty as="span" />}
                    <RowIcon><Svg name={icon} size={16} /></RowIcon>
                    <RowLabel>{label}</RowLabel>
                  </Row>
                ))}
              </TreeList>
              <Scroll axis="y" rest={46} />
              <Scroll axis="x" rest={4} />
              <ScrollCorner />
            </TreeFrame>
            <Splitter $size={6} />
            <Dock name="レイヤ" />
            <DockTools>
              <SmallButton aria-label="Styling"><Svg name="brush" size={15} /></SmallButton>
              <SmallButton aria-label="Add Group"><Svg name="addgroup" size={15} /></SmallButton>
              <SmallButton aria-label="Themes"><Svg name="eye" size={16} /></SmallButton>
              <SmallButton aria-label="Filter Legend"><Svg name="filtermenu" size={16} /></SmallButton>
              <SmallButton aria-label="Filter by Expression"><Svg name="epsilon" size={16} /></SmallButton>
              <DropButton aria-label="Expression menu"><Arrow /></DropButton>
              <SmallButton aria-label="Expand All"><Svg name="expand" size={15} /></SmallButton>
              <MoreButton aria-label="More">»</MoreButton>
            </DockTools>
            <LayerBox>
              <li>
                <LayerRow><Tick type="checkbox" defaultChecked /><Marker />agents_walk_test</LayerRow>
              </li>
            </LayerBox>
          </Side>
          <Splitter $vertical $size={6} />
          <Center>
            <Dock name="時系列コントローラ" />
            <Temporal>
              <ModeBar>
                <ModeButton $on aria-label="Off"><Svg name="toff" size={16} /></ModeButton>
                <ModeButton aria-label="Fixed Range"><Svg name="clock" size={16} /></ModeButton>
                <ModeButton aria-label="Animated"><Svg name="tplay" size={16} /></ModeButton>
                <ModeButton aria-label="Movie"><Svg name="tfilm" size={16} /></ModeButton>
                <ModeLabel>時系列ナビを無効化</ModeLabel>
                <GearButton aria-label="Settings"><Svg name="goldgear" size={16} /></GearButton>
              </ModeBar>
              <ScrollHost><Scroll axis="y" rest={4} /></ScrollHost>
            </Temporal>
            <Splitter $size={5} />
            <MapCanvas>
              <svg width="100%" height="100%" role="img" aria-label="Map canvas">
                {routes.map((r, i) => (
                  <g key={i} fill="#e5b636" stroke="#35322a">
                    {dotsAlong(r, 4.5).map(([x, y], j) => <circle key={j} cx={x} cy={y} r="3.800" />)}
                  </g>
                ))}
              </svg>
            </MapCanvas>
          </Center>
        </Body>
        <StatusBar>
          <Box $w={200}>
            <SearchIcon><Svg name="mag" size={13} /></SearchIcon>
            <Field aria-label="Search" placeholder="検索(Ctrl + K)" />
          </Box>
          <Spacer />
          <StatusLabel htmlFor="coord">座標</StatusLabel>
          <Box $w={141}><Field id="coord" defaultValue="33.591264° ,130.40115°" /></Box>
          <StatusButton $w={24} aria-label="Toggle extents"><Svg name="mouse" size={16} /></StatusButton>
          <StatusLabel htmlFor="scale">縮尺</StatusLabel>
          <Box $w={78}>
            <Scale id="scale"><option>1:781</option></Scale>
            <ComboArrow><Arrow /></ComboArrow>
          </Box>
          <StatusButton $w={34} aria-label="Lock scale"><Svg name="lock" size={15} /></StatusButton>
          <StatusLabel htmlFor="mag" $before={0}>拡大</StatusLabel>
          <Spin id="mag" value="100%" />
          <StatusLabel htmlFor="rot" $after={10}>回転</StatusLabel>
          <Spin id="rot" value="0.0 °" />
          <RenderLabel><Tick type="checkbox" defaultChecked />レンダ</RenderLabel>
          <StatusButton $w={88}><Svg name="crs" size={15} />EPSG:4326</StatusButton>
          <StatusButton $w={42} aria-label="Messages"><Svg name="bubble" size={17} /></StatusButton>
          <SizeGrip />
        </StatusBar>
      </Window>
    </>
  );
}
